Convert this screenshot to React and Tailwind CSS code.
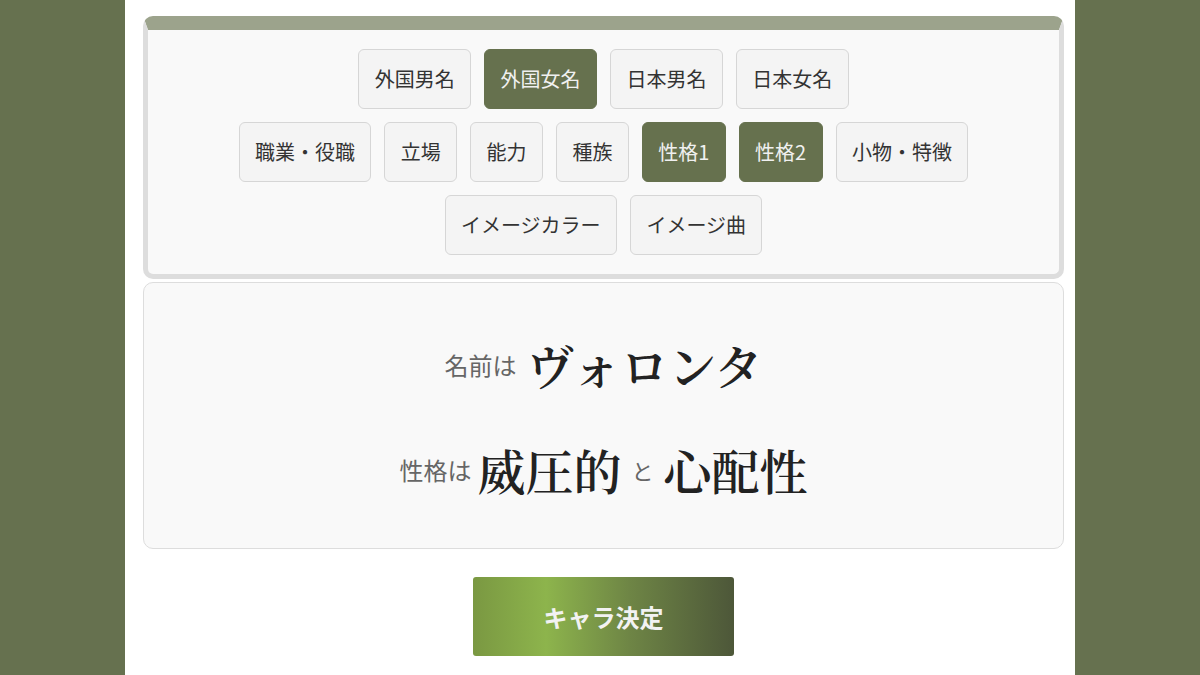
import React from "react";

const rows = [
  [["外国男名", false], ["外国女名", true], ["日本男名", false], ["日本女名", false]],
  [["職業・役職", false], ["立場", false], ["能力", false], ["種族", false], ["性格1", true], ["性格2", true], ["小物・特徴", false]],
  [["イメージカラー", false], ["イメージ曲", false]],
];

function Tag({ label, active }) {
  return (
    <button
      className={
        "h-[60px] px-[15.4px] rounded-[6px] border text-[20px] leading-none whitespace-nowrap " +
        (active
          ? "bg-[#66714e] border-[#66714e] text-[#f0f0f0]"
          : "bg-[#f4f4f4] border-[#d6d6d6] text-[#333333]")
      }
    >
      {label}
    </button>
  );
}

const serif = "font-['Noto_Serif_CJK_JP','Noto_Sans_CJK_JP',serif]";

export default function App() {
  return (
    <div className="min-h-[675px] w-full bg-[#66714f] font-['Noto_Sans_CJK_JP','Noto_Sans',sans-serif]">
      <div className="mx-auto w-[950px] min-h-[675px] bg-white pl-[18px] pr-[11px] pt-[16px]">
        <div className="rounded-[10px] border-t-[14px] border-x-[5px] border-b-[5px] border-t-[#9ca38c] border-x-[#dddddd] border-b-[#dddddd] bg-[#f9f9f9] pt-[19px] pb-[19px] flex flex-col gap-[13px]">
          {rows.map((row, i) => (
            <div key={i} className="flex justify-center gap-[13px]">
              {row.map(([l, a]) => (
                <Tag key={l} label={l} active={a} />
              ))}
            </div>
          ))}
        </div>

        <div className="mt-[3px] rounded-[10px] border border-[#dddddd] bg-[#f9f9f9] pt-[52px] pb-[48px] flex flex-col gap-[45px]">
          <div className="h-[60px] flex items-center justify-center">
            <span className="text-[24px] text-[#666666] mr-[10px]">名前は</span>
            <span className={"text-[48px] font-semibold text-[#222222] " + serif}>ヴォロンタ</span>
          </div>
          <div className="h-[60px] flex items-center justify-center">
            <span className="text-[24px] text-[#666666] mr-[6px]">性格は</span>
            <span className={"text-[48px] font-semibold text-[#222222] " + serif}>威圧的</span>
            <span className="text-[22px] text-[#666666] mx-[10px]">と</span>
            <span className={"text-[48px] font-semibold text-[#222222] " + serif}>心配性</span>
          </div>
        </div>

        <div className="flex justify-center mt-[28px]">
          <button className="w-[261px] h-[79px] rounded-[3px] bg-[linear-gradient(to_right,#7a9842_0%,#8db44c_28%,#6e8545_60%,#4d5739_100%)] text-[#f2f2f2] text-[24px] font-bold">
            キャラ決定
          </button>
        </div>
      </div>
    </div>
  );
}
